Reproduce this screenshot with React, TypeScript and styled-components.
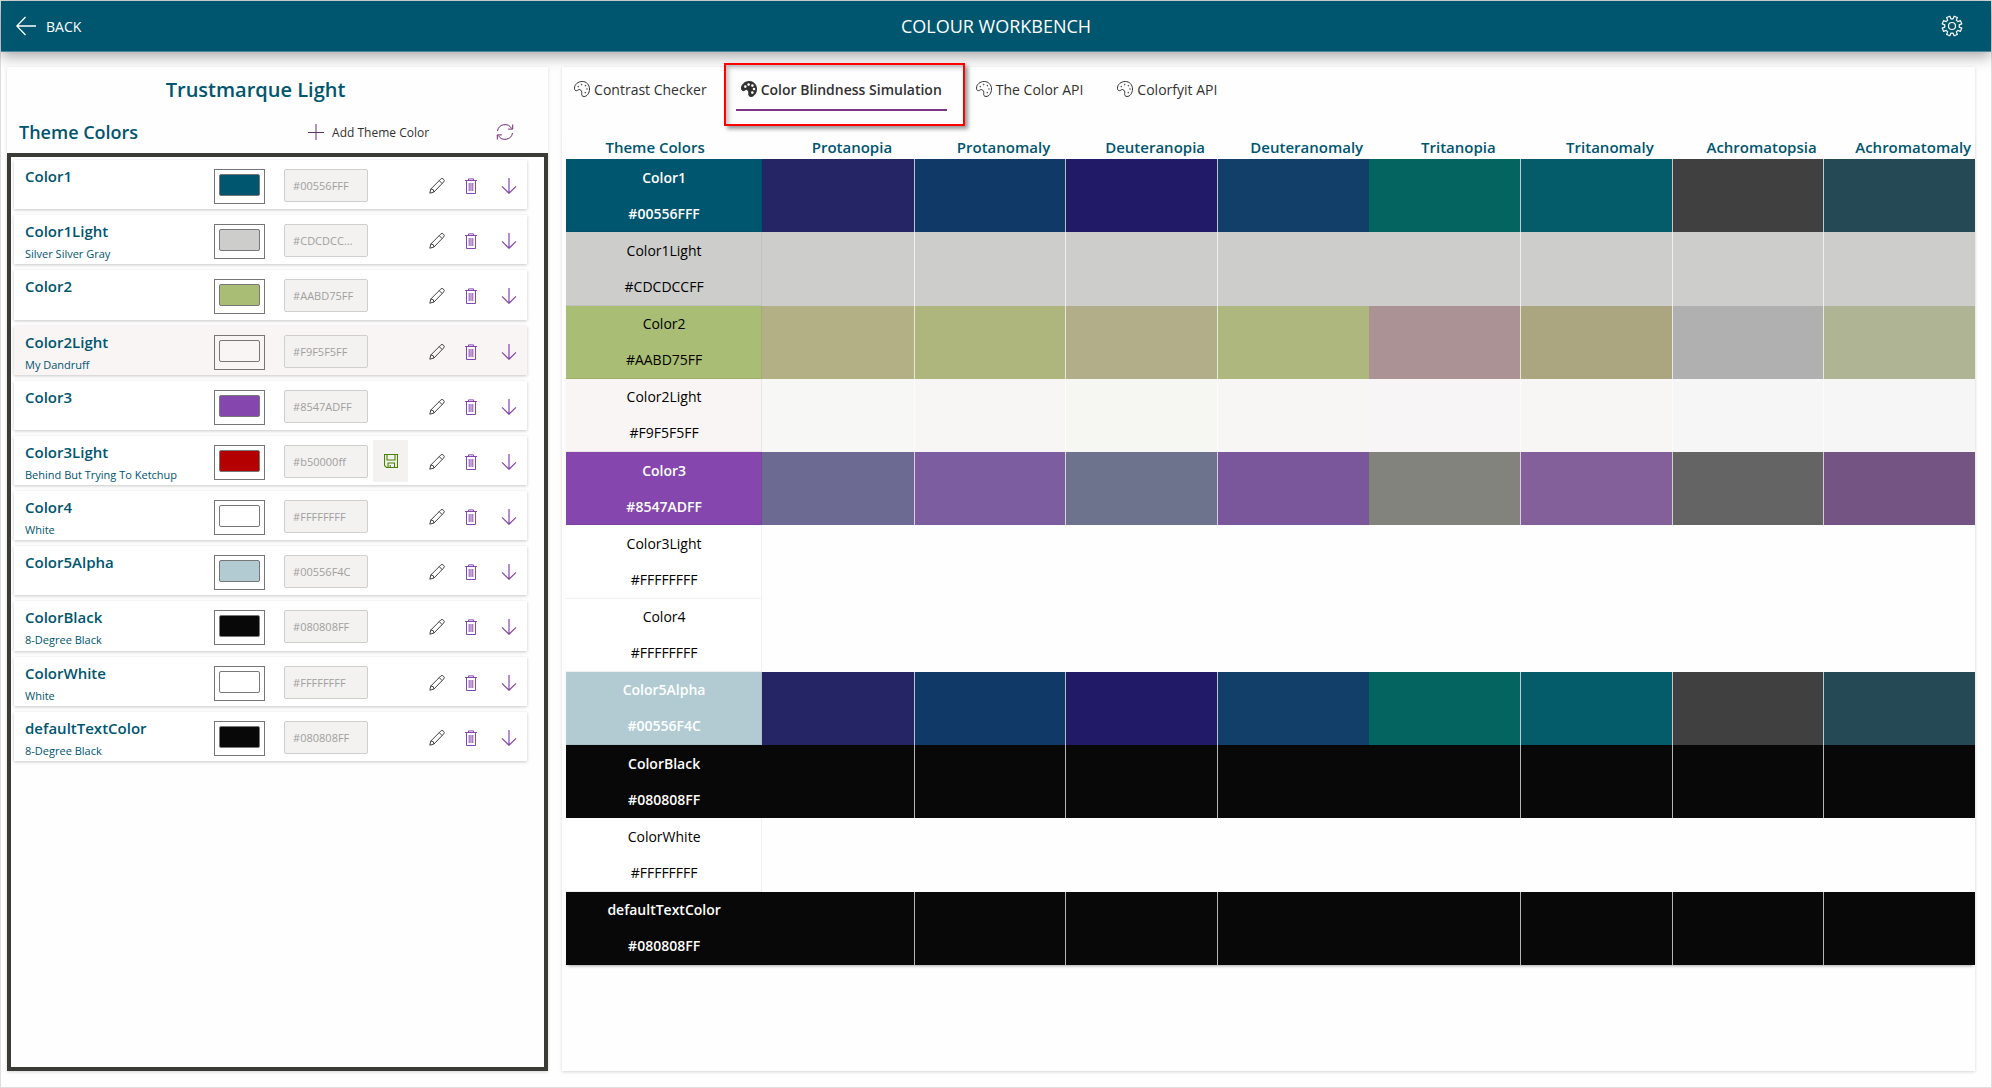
import React from 'react';
import styled, { createGlobalStyle, css } from 'styled-components';

const teal = '#00556f';
const purple = '#8547ad';

const GlobalStyle = createGlobalStyle`
  *, *::before, *::after { box-sizing: border-box; }
  body {
    margin: 0;
    background: #fefefe;
    color: #323130;
    font-family: "Open Sans", "Noto Sans", sans-serif;
    font-size: 14px;
  }
  button, input { font: inherit; color: inherit; }
  h1, h2, h3, p, ul { margin: 0; padding: 0; }
`;

const Page = styled.div`
  min-height: 100vh;
  display: flex;
  flex-direction: column;
  border: 1px solid #dedede;
`;

const Header = styled.header`
  display: grid;
  grid-template-columns: 1fr auto 1fr;
  align-items: center;
  height: 51px;
  padding: 0 15px;
  background: ${teal};
  border-bottom: 1px solid #4c8899;
  color: #fff;
  box-shadow: 0 4px 14px rgba(0, 0, 0, 0.36);
`;

const PlainButton = styled.button`
  display: inline-flex;
  align-items: center;
  padding: 0;
  border: 0;
  background: none;
  cursor: pointer;
`;

const BackButton = styled(PlainButton)`
  gap: 10px;
  justify-self: start;
  font-size: 14px;
`;

const SettingsButton = styled(PlainButton)`
  justify-self: end;
  padding-right: 13px;
`;

const AppTitle = styled.h1`
  font-size: 18px;
  font-weight: 400;
`;

const Main = styled.main`
  flex: 1;
  display: grid;
  grid-template-columns: minmax(0, 36fr) minmax(0, 94fr);
  gap: 14px;
  padding: 15px 16px 16px 6px;
`;

const Panel = styled.section`
  display: flex;
  flex-direction: column;
  background: #fefefe;
  box-shadow: 0 1px 3px rgba(0, 0, 0, 0.16);
`;

const ThemeTitle = styled.h2`
  padding-right: 44px;
  font-size: 20px;
  font-weight: 600;
  line-height: 46px;
  text-align: center;
  color: ${teal};
`;

const Toolbar = styled.div`
  display: flex;
  align-items: center;
  justify-content: space-between;
  height: 40px;
  padding: 0 34px 2px 12px;
`;

const ToolbarTitle = styled.h3`
  font-size: 18px;
  font-weight: 600;
  color: ${teal};
`;

const ToolbarActions = styled.div`
  display: flex;
  align-items: center;
  gap: 67px;
`;

const AddButton = styled(PlainButton)`
  gap: 8px;
  font-size: 12px;
`;

const ListFrame = styled.div`
  flex: 1;
  padding: 3px 17px 3px 3px;
  border: 4px solid #3a3b37;
`;

const ColorList = styled.ul`
  display: grid;
  grid-auto-rows: 1fr;
  gap: 6px;
  min-height: 601px;
  list-style: none;
`;

const ColorRow = styled.li<{ $tinted?: boolean }>`
  display: grid;
  grid-template-columns: minmax(0, 1fr) 52px 84px 25px 16px 16px 20px;
  column-gap: 18px;
  padding: 0 10px 0 11px;
  background: ${(p) => (p.$tinted ? '#f9f5f5' : '#fff')};
  box-shadow: 0 1px 3px rgba(0, 0, 0, 0.22);
`;

const RowText = styled.div`
  padding-top: 5px;
  white-space: nowrap;
  color: ${teal};
`;

const RowName = styled.label`
  display: block;
  font-size: 15px;
  font-weight: 600;
  line-height: 22px;
`;

const RowNote = styled.p`
  padding-top: 3px;
  font-size: 11px;
  line-height: 18px;
`;

const Swatch = styled.input`
  appearance: none;
  width: 51px;
  height: 35px;
  margin: 9px 0 0;
  padding: 4px 4px 7px;
  border: 1px solid #767676;
  background: transparent;
  &::-webkit-color-swatch-wrapper { padding: 0; }
  &::-webkit-color-swatch { border: 1px solid #777; border-radius: 2px; }
`;

const HexField = styled.input`
  width: 84px;
  height: 33px;
  margin-top: 9px;
  padding: 0 13px 0 8px;
  border: 1px solid #cfcfce;
  border-radius: 2px;
  background: #f3f2f1;
  color: #a19f9d;
  font-size: 11px;
  text-overflow: ellipsis;
`;

const SaveSlot = styled.div`
  margin: 4px 0 0 -13px;
`;

const SaveButton = styled(PlainButton)`
  justify-content: center;
  width: 35px;
  height: 42px;
  background: #f3f2f1;
`;

const RowAction = styled(PlainButton)`
  align-self: start;
  justify-self: end;
  justify-content: center;
  width: 16px;
  height: 16px;
  margin-top: 18px;
`;

const Tabs = styled.div`
  display: flex;
  gap: 24px;
  padding: 0 0 0 7px;
`;

const Tab = styled.button<{ $active?: boolean }>`
  position: relative;
  display: flex;
  align-items: center;
  gap: 4px;
  height: 44px;
  padding: 2px 5px 0;
  border: 0;
  border-bottom: 2px solid ${(p) => (p.$active ? '#7d3585' : 'transparent')};
  background: none;
  font-size: 14px;
  font-weight: ${(p) => (p.$active ? 600 : 400)};
  white-space: nowrap;
  cursor: pointer;
`;

const Highlight = styled.span`
  position: absolute;
  inset: -4px -18px -17px -12px;
  border: 2px solid #ff0000;
  box-shadow: 3px 3px 4px rgba(0, 0, 0, 0.4), inset 3px 3px 4px rgba(0, 0, 0, 0.22);
  pointer-events: none;
`;

const TableWrap = styled.div`
  padding: 22px 0 0 4px;
`;

const Table = styled.table`
  width: 100%;
  height: 832px;
  table-layout: fixed;
  border-collapse: separate;
  border-spacing: 0;
  box-shadow: 0 3px 3px -2px rgba(0, 0, 0, 0.35);
`;

const HeadCell = styled.th<{ $first?: boolean }>`
  width: ${(p) => (p.$first ? '196px' : 'auto')};
  height: 26px;
  padding: ${(p) => (p.$first ? '2px 18px 0 0' : '2px 0 0 28px')};
  background: #fefefe;
  color: ${teal};
  font-size: 15px;
  font-weight: 600;
  line-height: 22px;
  text-align: center;
  white-space: nowrap;
`;

const TableHead = styled.thead``;

const TableBody = styled.tbody``;

const HeadRow = styled.tr`
  height: 26px;
`;

const BodyRow = styled.tr``;

const NameCell = styled.th<{ $bg: string; $light?: boolean }>`
  padding: 0;
  background: ${(p) => p.$bg};
  color: ${(p) => (p.$light ? '#fff' : '#000')};
  font-size: 14px;
  font-weight: ${(p) => (p.$light ? 600 : 400)};
  text-align: center;
  box-shadow: inset -1px -1px 0 rgba(0, 0, 0, 0.06);
`;

const CellLine = styled.span`
  display: block;
  line-height: 36px;
`;

const SimCell = styled.td<{ $bg: string; $divided?: boolean }>`
  padding: 0;
  background: ${(p) => p.$bg};
  ${(p) =>
    p.$divided &&
    css`
      border-left: 1px solid rgba(255, 255, 255, 0.7);
    `}
`;

type IconProps = { size?: number; color?: string };

const lineIcon = (box: number, body: React.ReactNode, width = 1) =>
  function LineIcon({ size = box, color = 'currentColor' }: IconProps) {
    return (
      <svg
        width={size}
        height={size}
        viewBox={`0 0 ${box} ${box}`}
        fill="none"
        stroke={color}
        strokeWidth={width}
        aria-hidden="true"
      >
        {body}
      </svg>
    );
  };

const BackIcon = lineIcon(20, <path d="M20 10H1M9.5 1L.8 10l8.7 9" />, 1.3);
const PlusIcon = lineIcon(16, <path d="M8 0v16M0 8.500h16" />);
const RefreshIcon = lineIcon(
  18,
  <path d="M1.5 8A7.6 7.6 0 0 1 15.6 5.5M16.5 10A7.6 7.6 0 0 1 2.4 12.5M16.7 1.5v4.6h-4.6M1.3 16.5v-4.6h4.6" />,
);
const PencilIcon = lineIcon(
  16,
  <path d="M.8 15.2l1-4.2L11.6 1.2a1.9 1.9 0 0 1 2.9 0 1.9 1.9 0 0 1 0 2.9L5 14zM1.8 11a3 3 0 0 1 3.2 3M10.2 2.6l3 3" />,
);
const TrashIcon = lineIcon(
  16,
  <path d="M2 2.5h12M5.5 2.5V.9h5v1.6M3.5 2.5v13h9v-13M6.2 5v8M8 5v8M9.8 5v8" />,
);
const DownIcon = lineIcon(16, <path d="M8 0v15.2M1 8.4l7 6.9 7-6.9" />, 1.2);
const SaveIcon = lineIcon(
  14,
  <path d="M.5.5h13v13h-11l-2-2zM3 .5v5.5h8V.5M4 13.5v-4.5h6.500v4.500M6.200 13v-2" />,
  1.1,
);

function GearIcon() {
  const teeth = 8;
  const points: string[] = [];
  for (let i = 0; i < teeth; i += 1) {
    const base = (i * 360) / teeth;
    [
      [-14, 7.3],
      [-10, 10],
      [10, 10],
      [14, 7.3],
    ].forEach(([offset, radius]) => {
      const angle = ((base + 22.5 + offset) * Math.PI) / 180;
      points.push(`${(11 + radius * Math.sin(angle)).toFixed(2)},${(11 - radius * Math.cos(angle)).toFixed(2)}`);
    });
  }
  return (
    <svg width="22" height="22" viewBox="0 0 22 22" fill="none" stroke="#fff" strokeWidth="1.2" aria-hidden="true">
      <polygon points={points.join(' ')} strokeLinejoin="round" />
      <circle cx="11" cy="11" r="3.500" />
    </svg>
  );
}

const paletteDots = [
  [4.3, 5.6],
  [7.6, 3.6],
  [11.4, 4.6],
  [13, 8],
  [11.3, 11.6],
];

function PaletteIcon({ solid }: { solid?: boolean }) {
  return (
    <svg width="16" height="16" viewBox="0 0 16 16" aria-hidden="true">
      <path
        d="M5.800 8.600C4.500 8 3.800 9.700 2.300 9.700 1 9.700.5 8.500.5 7.200.5 3.400 4 .5 8.300.5c4.300 0 7.200 3.300 7.200 7.500 0 4.200-2.600 7.500-5.400 7.500-1.900 0-2.700-1.300-2.400-3 .3-1.800-.2-3.200-1.900-3.900z"
        fill={solid ? '#323130' : 'none'}
        stroke="#323130"
        strokeWidth="1"
      />
      {paletteDots.map(([x, y]) => (
        <circle key={`${x}-${y}`} cx={x} cy={y} r={solid ? 1.3 : 0.8} fill={solid ? '#fff' : '#55534f'} />
      ))}
    </svg>
  );
}

type ThemeColor = {
  name: string;
  note?: string;
  hex: string;
  swatch: string;
  tinted?: boolean;
  unsaved?: boolean;
};

const themeColors: ThemeColor[] = [
  { name: 'Color1', hex: '#00556FFF', swatch: '#00556f' },
  { name: 'Color1Light', note: 'Silver Silver Gray', hex: '#CDCDCCFF', swatch: '#cdcdcc' },
  { name: 'Color2', hex: '#AABD75FF', swatch: '#aabd75' },
  { name: 'Color2Light', note: 'My Dandruff', hex: '#F9F5F5FF', swatch: '#f9f5f5', tinted: true },
  { name: 'Color3', hex: '#8547ADFF', swatch: '#8547ad' },
  { name: 'Color3Light', note: 'Behind But Trying To Ketchup', hex: '#b50000ff', swatch: '#b50000', unsaved: true },
  { name: 'Color4', note: 'White', hex: '#FFFFFFFF', swatch: '#ffffff' },
  { name: 'Color5Alpha', hex: '#00556F4C', swatch: '#b2cbd3' },
  { name: 'ColorBlack', note: '8-Degree Black', hex: '#080808FF', swatch: '#080808' },
  { name: 'ColorWhite', note: 'White', hex: '#FFFFFFFF', swatch: '#ffffff' },
  { name: 'defaultTextColor', note: '8-Degree Black', hex: '#080808FF', swatch: '#080808' },
];

const visionTypes = [
  'Protanopia',
  'Protanomaly',
  'Deuteranopia',
  'Deuteranomaly',
  'Tritanopia',
  'Tritanomaly',
  'Achromatopsia',
  'Achromatomaly',
];

const tealSims = ['#252566', '#103968', '#211a66', '#113f69', '#046460', '#045c6b', '#404040', '#254a55'];
const blackSims = visionTypes.map(() => '#080808');
const whiteSims = visionTypes.map(() => '#fefefe');

const simulations = [
  { name: 'Color1', hex: '#00556FFF', bg: '#00556f', light: true, cells: tealSims },
  { name: 'Color1Light', hex: '#CDCDCCFF', bg: '#cdcdcc', cells: visionTypes.map(() => '#cdcdcb') },
  {
    name: 'Color2',
    hex: '#AABD75FF',
    bg: '#aabd75',
    cells: ['#b3b086', '#aeb67e', '#b2ae89', '#aeb77d', '#ab9294', '#aba680', '#b0b0b0', '#aeb494'],
  },
  {
    name: 'Color2Light',
    hex: '#F9F5F5FF',
    bg: '#f9f5f5',
    cells: ['#f7f7f5', '#f7f6f4', '#f6f7f3', '#f7f6f5', '#f8f5f6', '#f8f5f5', '#f6f6f6', '#f7f6f6'],
  },
  {
    name: 'Color3',
    hex: '#8547ADFF',
    bg: '#8547ad',
    light: true,
    cells: ['#6c6a93', '#7c5d9f', '#6d728d', '#7a579b', '#83837d', '#84609a', '#646464', '#735483'],
  },
  { name: 'Color3Light', hex: '#FFFFFFFF', bg: '#fff', cells: whiteSims },
  { name: 'Color4', hex: '#FFFFFFFF', bg: '#fff', cells: whiteSims },
  { name: 'Color5Alpha', hex: '#00556F4C', bg: '#b2cbd3', light: true, cells: tealSims },
  { name: 'ColorBlack', hex: '#080808FF', bg: '#080808', light: true, cells: blackSims },
  { name: 'ColorWhite', hex: '#FFFFFFFF', bg: '#fff', cells: whiteSims },
  { name: 'defaultTextColor', hex: '#080808FF', bg: '#080808', light: true, cells: blackSims },
];

const tabs = ['Contrast Checker', 'Color Blindness Simulation', 'The Color API', 'Colorfyit API'];
const activeTab = 'Color Blindness Simulation';

function ThemeColorRow({ item }: { item: ThemeColor }) {
  const id = `hex-${item.name}`;
  return (
    <ColorRow $tinted={item.tinted}>
      <RowText>
        <RowName htmlFor={id}>{item.name}</RowName>
        {item.note && <RowNote>{item.note}</RowNote>}
      </RowText>
      <Swatch type="color" defaultValue={item.swatch} aria-label={`${item.name} swatch`} />
      <HexField id={id} type="text" value={item.hex} disabled readOnly />
      <SaveSlot>
        {item.unsaved && (
          <SaveButton type="button" aria-label={`Save ${item.name}`}>
            <SaveIcon color="#498205" />
          </SaveButton>
        )}
      </SaveSlot>
      <RowAction type="button" aria-label={`Edit ${item.name}`}>
        <PencilIcon color="#44423f" />
      </RowAction>
      <RowAction type="button" aria-label={`Delete ${item.name}`}>
        <TrashIcon color={purple} />
      </RowAction>
      <RowAction type="button" aria-label={`Move ${item.name} down`}>
        <DownIcon color={purple} />
      </RowAction>
    </ColorRow>
  );
}

export default function App() {
  return (
    <Page>
      <GlobalStyle />
      <Header>
        <BackButton type="button">
          <BackIcon />
          BACK
        </BackButton>
        <AppTitle>COLOUR WORKBENCH</AppTitle>
        <SettingsButton type="button" aria-label="Settings">
          <GearIcon />
        </SettingsButton>
      </Header>
      <Main>
        <Panel>
          <ThemeTitle>Trustmarque Light</ThemeTitle>
          <Toolbar>
            <ToolbarTitle>Theme Colors</ToolbarTitle>
            <ToolbarActions>
              <AddButton type="button">
                <PlusIcon color="#5c3566" />
                Add Theme Color
              </AddButton>
              <PlainButton type="button" aria-label="Refresh">
                <RefreshIcon color="#742774" />
              </PlainButton>
            </ToolbarActions>
          </Toolbar>
          <ListFrame>
            <ColorList>
              {themeColors.map((item) => (
                <ThemeColorRow key={item.name} item={item} />
              ))}
            </ColorList>
          </ListFrame>
        </Panel>
        <Panel>
          <Tabs role="tablist">
            {tabs.map((label) => {
              const active = label === activeTab;
              return (
                <Tab key={label} type="button" role="tab" aria-selected={active} $active={active}>
                  <PaletteIcon solid={active} />
                  {label}
                  {active && <Highlight />}
                </Tab>
              );
            })}
          </Tabs>
          <TableWrap>
            <Table>
              <TableHead>
                <HeadRow>
                  <HeadCell scope="col" $first>
                    Theme Colors
                  </HeadCell>
                  {visionTypes.map((type) => (
                    <HeadCell key={type} scope="col">
                      {type}
                    </HeadCell>
                  ))}
                </HeadRow>
              </TableHead>
              <TableBody>
                {simulations.map((row) => (
                  <BodyRow key={row.name}>
                    <NameCell scope="row" $bg={row.bg} $light={row.light}>
                      <CellLine>{row.name}</CellLine>
                      <CellLine>{row.hex}</CellLine>
                    </NameCell>
                    {row.cells.map((color, i) => (
                      <SimCell key={visionTypes[i]} $bg={color} $divided={i !== 0 && i !== 4} />
                    ))}
                  </BodyRow>
                ))}
              </TableBody>
            </Table>
          </TableWrap>
        </Panel>
      </Main>
    </Page>
  );
}
